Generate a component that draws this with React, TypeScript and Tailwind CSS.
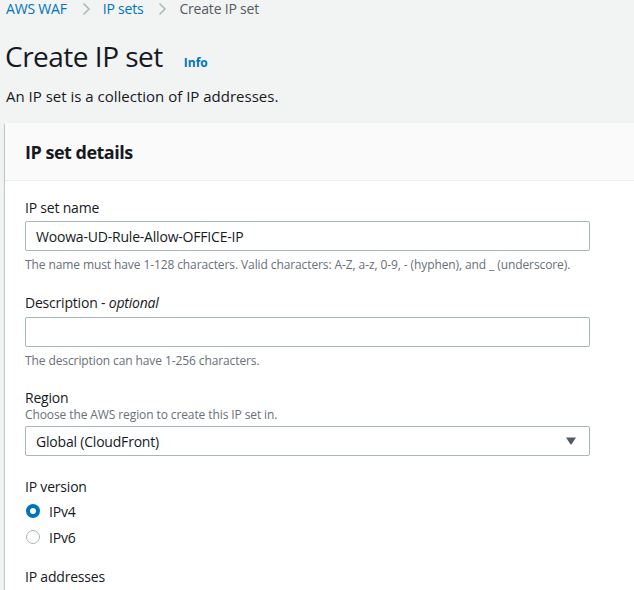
import React from "react";

const font = { fontFamily: '"Open Sans", "Noto Sans", sans-serif' };

function Chevron() {
  return (
    <svg width="9" height="14" viewBox="0 0 9 14" className="ml-[15px] mr-[12px]">
      <path d="M1.5 1.5 L7 7 L1.5 12.5" fill="none" stroke="#aab7b8" strokeWidth="1.5" />
    </svg>
  );
}

function Radio({ checked, label }: { checked: boolean; label: string }) {
  return (
    <div className="flex items-center h-[26px]">
      <div className="w-[16px] flex justify-center">
        {checked ? (
          <div className="w-[14px] h-[14px] rounded-full border-[4px] border-[#0073bb] bg-white" />
        ) : (
          <div className="w-[14px] h-[14px] rounded-full border border-[#aab7b8] bg-white" />
        )}
      </div>
      <span className="ml-[8px] text-[14px] text-[#16191f] tracking-[-0.2px]">{label}</span>
    </div>
  );
}

export default function App() {
  return (
    <div className="w-[634px] h-[590px] overflow-hidden bg-[#f2f3f3] text-[#16191f]" style={font}>
      <div className="flex items-center h-[16px] pt-[1px] pl-[6px] text-[14px] leading-[15px] tracking-[-0.2px]">
        <span className="text-[#0073bb]">AWS WAF</span>
        <Chevron />
        <span className="text-[#0073bb]">IP sets</span>
        <Chevron />
        <span className="text-[#545b64]">Create IP set</span>
      </div>
      <div className="flex items-baseline pl-[5px] mt-[23px]">
        <h1 className="text-[28px] leading-[34px] font-normal tracking-[-0.5px]">Create IP set</h1>
        <span className="ml-[21px] text-[12px] font-bold text-[#0073bb]">Info</span>
      </div>
      <p className="pl-[6px] mt-[13px] text-[15px] leading-[20px]">An IP set is a collection of IP addresses.</p>
      <div className="ml-[5px] mt-[17px] bg-white shadow-[0_1px_1px_0_rgba(0,28,36,0.3),1px_1px_1px_0_rgba(0,28,36,0.15),-1px_1px_1px_0_rgba(0,28,36,0.15)]">
        <div className="bg-[#fafafa] border-b border-[#eaeded] h-[58px] flex items-center pl-[20px]">
          <h2 className="text-[18px] font-bold leading-[22px] tracking-[-0.5px]">IP set details</h2>
        </div>
        <div className="pl-[20px] pr-[44px] pt-[17px] pb-[60px] tracking-[-0.2px]">
          <div className="text-[14px] leading-[20px]">IP set name</div>
          <div className="mt-[3px] h-[30px] border border-[#aab7b8] rounded-[2px] flex items-center pl-[10px] text-[14px]">
            Woowa-UD-Rule-Allow-OFFICE-IP
          </div>
          <div className="mt-[6px] text-[12px] leading-[16px] text-[#687078] tracking-[-0.1px]">
            The name must have 1-128 characters. Valid characters: A-Z, a-z, 0-9, - (hyphen), and _ (underscore).
          </div>

          <div className="mt-[20px] text-[14px] leading-[20px]">
            Description - <i>optional</i>
          </div>
          <div className="mt-[4px] h-[30px] border border-[#aab7b8] rounded-[2px]" />
          <div className="mt-[6px] text-[12px] leading-[16px] text-[#687078] tracking-[-0.1px]">The description can have 1-256 characters.</div>

          <div className="mt-[20px] text-[14px] leading-[18px]">Region</div>
          <div className="text-[12px] leading-[16px] text-[#687078] tracking-[-0.1px]">Choose the AWS region to create this IP set in.</div>
          <div className="mt-[3px] h-[30px] border border-[#aab7b8] rounded-[2px] flex items-center justify-between pl-[10px] pr-[13px] text-[14px]">
            <span>Global (CloudFront)</span>
            <svg width="10" height="8" viewBox="0 0 10 8">
              <path d="M0 0.5 H10 L5.6 7.2 Q5 7.8 4.4 7.2 Z" fill="#545b64" />
            </svg>
          </div>

          <div className="mt-[21px] text-[14px] leading-[20px]">IP version</div>
          <div className="mt-[1px]">
            <Radio checked label="IPv4" />
            <Radio checked={false} label="IPv6" />
          </div>
          <div className="mt-[17px] text-[14px] leading-[20px]">IP addresses</div>
        </div>
      </div>
    </div>
  );
}
